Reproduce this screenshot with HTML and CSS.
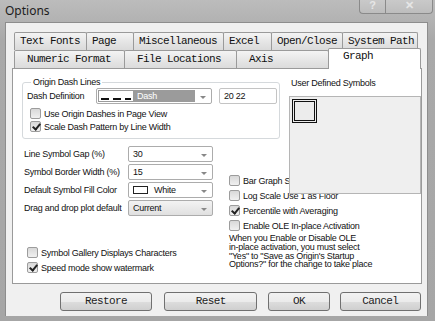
FILE: index.html
```html
<!DOCTYPE html>
<html lang="en">
<head>
  <meta charset="UTF-8" />
  <title>Options</title>
  <link rel="stylesheet" href="styles.css">
</head>
<body>
  <div class="window">
    <div class="titlebar">
      <span class="title">Options</span>
      <div class="caption-btns">
        <span class="cap help">?</span>
        <span class="cap close">✕</span>
      </div>
    </div>

    <div class="client">
      <div class="tabs">
        <div class="tab-row row1">
          <span class="tab">Text Fonts</span>
          <span class="tab">Page</span>
          <span class="tab">Miscellaneous</span>
          <span class="tab">Excel</span>
          <span class="tab">Open/Close</span>
          <span class="tab">System Path</span>
        </div>
        <div class="tab-row row2">
          <span class="tab">Numeric Format</span>
          <span class="tab">File Locations</span>
          <span class="tab">Axis</span>
          <span class="tab active">Graph</span>
        </div>
      </div>

      <div class="panel">
        <fieldset class="group">
          <legend>Origin Dash Lines</legend>
          <div class="dash-row">
            <span class="label">Dash Definition</span>
            <div class="combo dash-combo">
              <span class="dash-sel"><span class="dash-sample"></span>Dash</span>
              <span class="arrow"></span>
            </div>
            <div class="edit">20 22</div>
          </div>
          <label class="check"><span class="box"></span>Use Origin Dashes in Page View</label>
          <label class="check"><span class="box checked"></span>Scale Dash Pattern by Line Width</label>
        </fieldset>

        <div class="lower">
          <div class="left-col">
            <div class="fields">
              <span class="label">Line Symbol Gap (%)</span>
              <div class="combo"><span class="val">30</span><span class="arrow"></span></div>
              <span class="label">Symbol Border Width (%)</span>
              <div class="combo"><span class="val">15</span><span class="arrow"></span></div>
              <span class="label">Default Symbol Fill Color</span>
              <div class="combo"><span class="val"><span class="swatch"></span>White</span><span class="arrow"></span></div>
              <span class="label">Drag and drop plot default</span>
              <div class="combo list"><span class="val">Current</span><span class="arrow"></span></div>
            </div>
            <div class="bottom-checks">
              <label class="check"><span class="box"></span>Symbol Gallery Displays Characters</label>
              <label class="check"><span class="box checked"></span>Speed mode show watermark</label>
            </div>
          </div>
          <div class="right-col">
            <label class="check"><span class="box"></span>Bar Graph Show Pattern</label>
            <label class="check"><span class="box"></span>Log Scale Use 1 as Floor</label>
            <label class="check"><span class="box checked"></span>Percentile with Averaging</label>
            <label class="check"><span class="box"></span>Enable OLE In-place Activation</label>
            <p class="note">When you Enable or Disable OLE<br>in-place activation, you must select<br>"Yes" to "Save as Origin's Startup<br>Options?" for the change to take place</p>
          </div>
        </div>

        <div class="symbols">
          <div class="sym-label">User Defined Symbols</div>
          <div class="sym-box"><span class="sym-cell"></span></div>
        </div>
      </div>

      <div class="buttons">
        <button class="btn restore">Restore</button>
        <button class="btn reset">Reset</button>
        <button class="btn ok">OK</button>
        <button class="btn cancel">Cancel</button>
      </div>
    </div>
  </div>
</body>
</html>
```

FILE: styles.css
```css
* { box-sizing: border-box; }
body {
  margin: 0;
  width: 435px;
  height: 321px;
  overflow: hidden;
  font-family: 'Liberation Sans', Arial, sans-serif;
  background: #a8a8a8;
}
.window {
  width: 435px;
  height: 321px;
  background: linear-gradient(#bcbcbc, #a9a9a9 40px, #a6a6a6);
  padding: 0 7px 5px 5px;
  display: flex;
  flex-direction: column;
}
/* Title bar */
.titlebar {
  height: 23px;
  display: flex;
  align-items: flex-start;
  justify-content: space-between;
}
.title {
  font-family: 'Noto Sans', 'Liberation Sans', sans-serif;
  font-size: 12px;
  color: #1c1c1c;
  margin-top: 2px;
}
.caption-btns { display: flex; margin-right: -5px; }
.cap {
  height: 14px;
  border: 1px solid #8a8a8a;
  border-top: none;
  background: linear-gradient(#c9c9c9, #bdbdbd);
  color: #e6e6e6;
  font-size: 11px;
  font-weight: bold;
  line-height: 10px;
  text-align: center;
}
.help { width: 26px; border-radius: 0 0 0 4px; border-right: none; }
.close { width: 48px; border-radius: 0 0 4px 0; }
/* Client area */
.client {
  flex: 1;
  background: #f0f0f0;
  border: 1px solid #8d8d8d;
  border-bottom: none;
  padding: 9px 6px 0 6px;
  display: flex;
  flex-direction: column;
}
/* Tabs */
.tabs { padding-left: 2px; font-family: 'Liberation Mono', 'Courier New', monospace; font-size: 11px; letter-spacing: -0.6px; color: #111; }
.tab-row { display: grid; height: 18px; }
.row1 { grid-template-columns: 72px 47px 90px 48px 71px 75px; }
.row2 { grid-template-columns: 110px 112px 92px 93px; }
.tab {
  border: 1px solid #9a9a9a;
  border-bottom: none;
  border-radius: 2px 2px 0 0;
  background: linear-gradient(#f4f4f4, #e6e6e6 50%, #dadada);
  line-height: 17px;
  white-space: nowrap;
  margin-right: -1px;
}
.row1 .tab { padding-left: 5px; }
.row2 .tab { padding-left: 12px; }
.tab.active {
  background: #fff;
  margin-top: -2px;
  height: 21px;
  position: relative;
  z-index: 2;
  line-height: 14px;
  padding-left: 14px;
  margin-right: 0;
}
/* Panel */
.panel {
  position: relative;
  height: 216px;
  width: 410px;
  background: #fff;
  border: 1px solid #9a9a9a;
  padding: 8px 0 0 9px;
  font-size: 9px;
  letter-spacing: -0.25px;
  color: #111;
}
.label { white-space: nowrap; }
.group {
  width: 258px;
  height: 62px;
  margin: 0;
  border: 1px solid #d5d9dc;
  border-radius: 3px;
  padding: 0 0 0 4px;
}
.group legend { padding: 0 2px; margin-left: 4px; }
.dash-row { display: flex; align-items: center; gap: 7px; height: 16px; margin: 1px 0 3px 0; }
.dash-row .label { width: 62px; }
.combo {
  height: 16px;
  border: 1px solid #acacac;
  border-radius: 2px;
  background: #fff;
  display: flex;
  align-items: center;
  justify-content: space-between;
  padding: 1px;
}
.dash-combo { width: 116px; }
.dash-sel {
  background: #9b9b9b;
  color: #fff;
  height: 12px;
  width: 97px;
  display: flex;
  align-items: center;
  gap: 4px;
}
.dash-sample {
  width: 34px;
  height: 10px;
  margin-left: 1px;
  background:
    repeating-linear-gradient(90deg, #111 0 8px, transparent 8px 12px) left 2px bottom 1px / 30px 2px no-repeat,
    #fff;
}
.arrow {
  width: 0;
  height: 0;
  border-left: 3px solid transparent;
  border-right: 3px solid transparent;
  border-top: 3px solid #888;
  margin: 3px 4px 0 0;
}
.edit {
  width: 58px;
  height: 16px;
  border: 1px solid #c4c4c4;
  border-radius: 2px;
  padding: 2px 0 0 4px;
}
.check { display: flex; align-items: center; gap: 3px; height: 13px; white-space: nowrap; margin-left: 3px; }
.box {
  width: 11px;
  height: 11px;
  border: 1px solid #9c9c9c;
  border-radius: 2px;
  background: linear-gradient(#d8d8d8, #f0f0f0);
  position: relative;
  flex: none;
}
.box.checked::after {
  content: '';
  position: absolute;
  left: 3px;
  top: 0;
  width: 3px;
  height: 6px;
  border: solid #222;
  border-width: 0 2px 2px 0;
  transform: rotate(40deg);
}
.lower {
  display: grid;
  grid-template-columns: 207px 1fr;
  margin-top: 7px;
}
.fields {
  display: grid;
  grid-template-columns: 104px 85px;
  row-gap: 2px;
  align-items: center;
  margin-left: 2px;
}
.combo .val { padding-left: 3px; display: flex; align-items: center; gap: 6px; }
.combo.list { background: linear-gradient(#f3f3f3, #e0e0e0); }
.swatch { width: 15px; height: 8px; border: 1px solid #222; background: #fff; }
.bottom-checks { margin-top: 30px; margin-left: 2px; display: flex; flex-direction: column; gap: 2px; }
.right-col { padding-top: 28px; display: flex; flex-direction: column; gap: 2px; }
.right-col .check { margin-left: 0; }
.note { margin: 0; line-height: 8.8px; }
/* User defined symbols */
.symbols { position: absolute; top: 9px; left: 276px; z-index: 3; }
.sym-label { margin-left: 2px; height: 18px; }
.sym-box {
  width: 132px;
  height: 98px;
  background: #efefef;
  border: 1px solid #b5b5b5;
  padding: 2px;
}
.sym-cell { display: block; width: 25px; height: 24px; border: 3px double #111; background: #ececec; }
/* Dialog buttons */
.buttons { display: flex; align-items: center; height: 32px; padding-top: 2px; }
.btn {
  height: 19px;
  border: 1px solid #707070;
  border-radius: 3px;
  background: linear-gradient(#f2f2f2, #ebebeb 50%, #dddddd 51%, #cfcfcf);
  font-family: 'Liberation Mono', 'Courier New', monospace;
  font-size: 11px;
  letter-spacing: -0.6px;
  color: #222;
  padding: 0;
}
.restore { width: 93px; margin-left: 48px; }
.reset { width: 94px; margin-left: 12px; }
.ok { width: 62px; margin-left: 11px; }
.cancel { width: 82px; margin-left: 10px; }
```
